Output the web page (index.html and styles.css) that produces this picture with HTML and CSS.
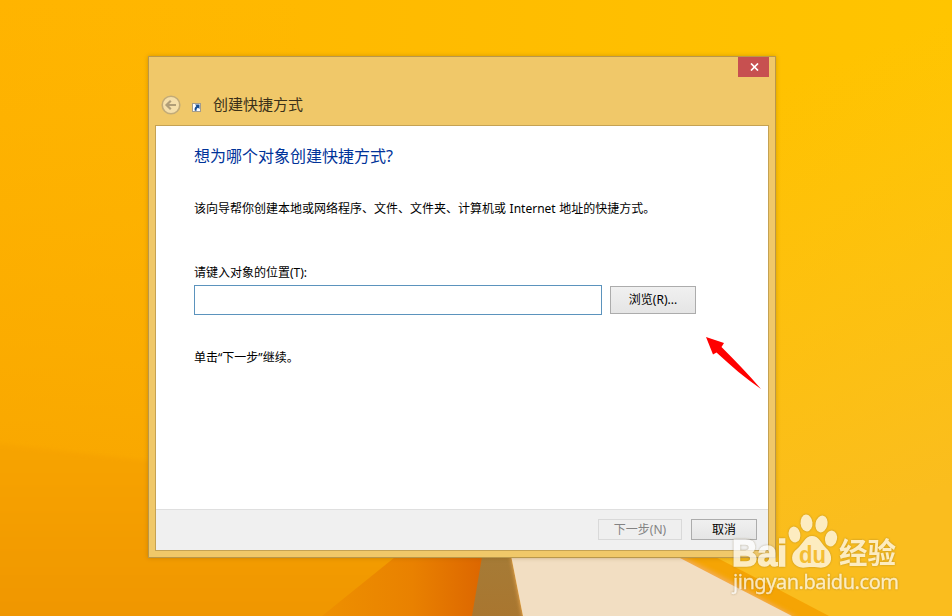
FILE: index.html
```html
<!DOCTYPE html>
<html lang="zh-CN">
  <head>
    <meta charset="utf-8">
    <title>创建快捷方式</title>
    <link rel="stylesheet" href="styles.css">
  </head>
  <body>
    <svg class="wallpaper" viewBox="0 0 952 616">
      <defs>
        <linearGradient id="sky" x1="0" y1="0" x2="1" y2="0">
          <stop offset="0" stop-color="#ffb400"/>
          <stop offset="0.5" stop-color="#ffbc00"/>
          <stop offset="1" stop-color="#ffc500"/>
        </linearGradient>
        <linearGradient id="left" x1="0" y1="0" x2="0" y2="1">
          <stop offset="0" stop-color="#fbac00" stop-opacity="0"/>
          <stop offset="1" stop-color="#f6a000"/>
        </linearGradient>
        <linearGradient id="right" x1="0" y1="0" x2="0.3" y2="1">
          <stop offset="0.3" stop-color="#fcc01e" stop-opacity="0"/>
          <stop offset="1" stop-color="#fabd1e"/>
        </linearGradient>
        <linearGradient id="dune" x1="0" y1="0" x2="0" y2="1">
          <stop offset="0" stop-color="#f7a400"/>
          <stop offset="1" stop-color="#f09600"/>
        </linearGradient>
        <linearGradient id="fold" x1="0" y1="0" x2="1" y2="0">
          <stop offset="0" stop-color="#ee9000"/>
          <stop offset="0.55" stop-color="#e98100"/>
          <stop offset="1" stop-color="#dc6500"/>
        </linearGradient>
        <linearGradient id="pole" x1="0" y1="0" x2="0" y2="1">
          <stop offset="0" stop-color="#a57c38"/>
          <stop offset="1" stop-color="#a9762f"/>
        </linearGradient>
        <filter id="soft"><feGaussianBlur stdDeviation="2"/></filter>
      </defs>
      <rect width="952" height="616" fill="url(#sky)"/>
      <rect width="300" height="616" fill="url(#left)"/>
      <rect x="476" width="476" height="616" fill="url(#right)"/>
      <path d="M-6 443L150 461L484 500V622H-6Z" fill="url(#dune)" filter="url(#soft)"/>
      <path d="M410 545L322 616H473L486 545Z" fill="url(#fold)"/>
      <path d="M484 545H509L523 616H472Z" fill="url(#pole)"/>
      <path d="M660 545H692L770 585L829 616H770Z" fill="#f5a404"/>
      <path d="M509 545H660L732 582L798 618H523Z" fill="#f3ad55" filter="url(#soft)"/>
      <path d="M509 545H655L730 584L792 616H523Z" fill="#f2dec2"/>
    </svg>

    <div class="dialog">
      <button class="close-button">
        <svg class="close-icon" viewBox="0 0 9 8"><path d="M1 0.5L8 7.5M8 0.5L1 7.5"/></svg>
      </button>
      <div class="title-bar">
        <svg class="back-icon" viewBox="0 0 20 20">
          <circle cx="10" cy="10" r="8.8"/>
          <path d="M15 10H6M9.8 5.7L5.5 10L9.8 14.3"/>
        </svg>
        <svg class="shortcut-icon" viewBox="0 0 9 9">
          <rect x="0.5" y="0.5" width="8" height="8" fill="#fff" stroke="#a39c8d"/>
          <path d="M3 1.5H7.5V6L6 4.7C4.6 5.5 4.4 6.4 4.6 7.7H2.8C2.2 5.8 2.8 4.4 4.4 3.1Z" fill="#174d91"/>
        </svg>
        <span class="title">创建快捷方式</span>
      </div>

      <div class="client">
        <div class="content">
          <h1 class="heading">想为哪个对象创建快捷方式?</h1>
          <p class="description">该向导帮你创建本地或网络程序、文件、文件夹、计算机或 Internet 地址的快捷方式。</p>
          <label class="location-label" for="location">请键入对象的位置(T):</label>
          <div class="location-row">
            <input type="text" id="location" class="location-input">
            <button class="button browse-button">浏览(R)...</button>
          </div>
          <p class="hint">单击<span class="quote">“</span>下一步<span class="quote">”</span>继续。</p>
        </div>
        <div class="footer">
          <button class="button next-button" disabled>下一步(N)</button>
          <button class="button cancel-button">取消</button>
        </div>
      </div>
    </div>

    <svg class="arrow" viewBox="0 0 56 54">
      <path d="M0 0L18 6L15.5 10C29.5 24 43 38 55 52C39 41 25 29 10.5 15.5L7 17.5Z"/>
    </svg>

    <svg class="watermark" viewBox="0 0 180 90">
      <g class="watermark-logo">
        <text x="2" y="56" class="logo-text" textLength="55" lengthAdjust="spacingAndGlyphs">Bai</text>
        <ellipse cx="64.5" cy="24.5" rx="5.8" ry="8" transform="rotate(-12 64.5 24.5)"/>
        <ellipse cx="76.5" cy="13" rx="6" ry="8.5" transform="rotate(-5 76.5 13)"/>
        <ellipse cx="91.5" cy="14" rx="6" ry="8.5" transform="rotate(12 91.5 14)"/>
        <ellipse cx="101" cy="28.5" rx="6" ry="8" transform="rotate(12 101 28.5)"/>
        <path d="M82 26C89 26 90 32 96 38C101 42 104 51 97 56C92 59 88 57 82 57C76 57 72 59 67 56C60 52 61 43 67 39C73 34 75 26 82 26Z"/>
        <text x="109" y="54" class="jingyan-text" textLength="57" lengthAdjust="spacingAndGlyphs">经验</text>
        <text x="3" y="79" class="url-text" textLength="166">jingyan.baidu.com</text>
      </g>
      <text x="69" y="53" class="du-text" textLength="27" lengthAdjust="spacingAndGlyphs">du</text>
    </svg>
  </body>
</html>
```

FILE: styles.css
```css
body {
  margin: 0;
  height: 616px;
  overflow: hidden;
  position: relative;
  display: flex;
  align-items: flex-start;
  background-color: #ffb900;
  font-family: "Noto Sans", "Noto Sans CJK SC", sans-serif;
  font-size: 12px;
  color: black;
}
.wallpaper {
  position: absolute;
  top: 0;
  left: 0;
  width: 952px;
  height: 616px;
}
.dialog {
  position: relative;
  box-sizing: border-box;
  width: 628px;
  height: 502px;
  margin: 56px 0 0 148px;
  padding: 0 6px 6px;
  border: 1px solid #b9974b;
  background-color: #f0c869;
  box-shadow: 0 0 4px rgba(120, 80, 0, 0.35);
  display: flex;
  flex-direction: column;
}
.close-button {
  align-self: flex-end;
  width: 31px;
  height: 20px;
  padding: 0;
  border: none;
  background-color: #c75050;
  display: flex;
  justify-content: center;
  align-items: center;
}
.close-icon {
  width: 9px;
  height: 8px;
  margin-left: 1px;
  stroke: white;
  stroke-width: 1.7;
}
.title-bar {
  box-sizing: border-box;
  height: 48px;
  padding: 1px 6px 7px;
  display: flex;
  align-items: center;
}
.back-icon {
  width: 20px;
  height: 20px;
  margin-top: 14px;
  fill: #f5dfaa;
  stroke: #c2ab78;
  stroke-width: 1.6;
}
.back-icon path {
  fill: none;
  stroke: #b09e78;
  stroke-width: 2.2;
}
.shortcut-icon {
  width: 9px;
  height: 9px;
  margin: 18px 12px 0 11px;
}
.title {
  font-size: 15px;
  line-height: 20px;
  margin-top: 12px;
  color: #3a3019;
}
.client {
  flex: 1;
  border: 1px solid #c5a253;
  background-color: white;
  display: flex;
  flex-direction: column;
}
.content {
  flex: 1;
  padding: 18px 38px 0;
}
.heading {
  margin: 0;
  font-size: 16px;
  font-weight: normal;
  line-height: 24px;
  color: #003399;
}
.description {
  margin: 31px 0 0;
  line-height: 20px;
  word-spacing: 0.5px;
  white-space: nowrap;
}
.location-label {
  display: block;
  margin-top: 44px;
  line-height: 20px;
}
.location-row {
  display: flex;
  align-items: center;
  gap: 8px;
  margin-top: 2px;
}
.location-input {
  box-sizing: border-box;
  width: 408px;
  height: 30px;
  border: 1px solid #5b93bd;
  background-color: white;
}
.button {
  box-sizing: border-box;
  padding: 0;
  border: 1px solid #acacac;
  background: linear-gradient(#f0f0f0, #e5e5e5);
  font-family: inherit;
  font-size: 12px;
  line-height: 18px;
  color: black;
}
.browse-button {
  width: 86px;
  height: 28px;
}
.hint {
  margin: 33px 0 0;
  line-height: 20px;
}
.quote {
  font-family: "Noto Sans", sans-serif;
}
.footer {
  box-sizing: border-box;
  height: 41px;
  padding: 0 11px 1px 0;
  border-top: 1px solid #dfdfdf;
  background-color: #f0f0f0;
  display: flex;
  justify-content: flex-end;
  align-items: center;
  gap: 9px;
}
.next-button {
  width: 84px;
  height: 21px;
  border-color: #d9d9d9;
  background: #efefef;
  color: #838383;
}
.cancel-button {
  width: 66px;
  height: 21px;
}
.arrow {
  position: absolute;
  top: 337px;
  left: 706px;
  width: 56px;
  height: 54px;
  fill: #ff0000;
}
.watermark {
  position: absolute;
  top: 510px;
  left: 730px;
  width: 180px;
  height: 90px;
}
.watermark-logo {
  fill: white;
  opacity: 0.72;
  filter: drop-shadow(0 0 1px rgba(110, 90, 40, 0.6));
}
.logo-text {
  font: bold 36px "Liberation Sans", sans-serif;
  stroke: white;
  stroke-width: 1.5;
}
.jingyan-text {
  font: bold 29px "Noto Sans CJK SC", sans-serif;
}
.url-text {
  font: 20px "Noto Sans", sans-serif;
  stroke: white;
  stroke-width: 0.3;
}
.du-text {
  font: bold 24px "Liberation Sans", sans-serif;
  fill: #f4bd33;
}
```
